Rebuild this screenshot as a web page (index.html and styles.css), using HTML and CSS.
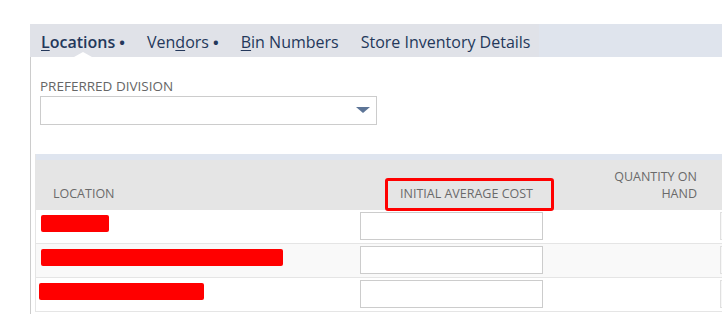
FILE: index.html
```html
<!DOCTYPE html>
<html>

<head>
	<meta charset="UTF-8">
	<meta name="viewport" content="width=device-width, initial-scale=1.0">
	<title>Locations</title>
	<link rel="stylesheet" href="styles.css">
</head>

<body>
	<div class="subtabs">
		<div class="tabs">
			<div class="tab active"><u>L</u>ocations <span class="dot">&bull;</span></div>
			<div class="tab">Ven<u>d</u>ors <span class="dot">&bull;</span></div>
			<div class="tab"><u>B</u>in Numbers</div>
			<div class="tab">Store Inventory Details</div>
		</div>
	</div>

	<div class="panel">
		<div class="field">
			<label>Preferred Division</label>
			<div class="select"><span class="arrow"></span></div>
		</div>

		<div class="grid">
			<div class="strip"></div>
			<div class="head">Location</div>
			<div class="head mark">Initial Average Cost<span class="highlight"></span></div>
			<div class="head right">Quantity on<br>Hand</div>
			<div class="head"></div>

			<div class="cell"><span class="redact" style="width: 68px"></span></div>
			<div class="cell"><div class="input"></div></div>
			<div class="cell"></div>
			<div class="cell"><div class="input stub"></div></div>

			<div class="cell alt"><span class="redact" style="width: 242px"></span></div>
			<div class="cell alt"><div class="input"></div></div>
			<div class="cell alt"></div>
			<div class="cell alt"><div class="input stub"></div></div>

			<div class="cell"><span class="redact shift" style="width: 165px"></span></div>
			<div class="cell"><div class="input"></div></div>
			<div class="cell"></div>
			<div class="cell"><div class="input stub"></div></div>
		</div>
	</div>
</body>

</html>
```

FILE: styles.css
```css
* {
	margin: 0px;
	padding: 0px;
	box-sizing: border-box;
}

body {
	font-family: "Open Sans", "Liberation Sans", sans-serif;
	background-color: #ffffff;
	overflow: hidden;
	width: 722px;
	height: 314px;
}

.subtabs {
	margin-top: 24px;
	margin-left: 30px;
	height: 33px;
	background-color: #dfe4ed;
}

.tabs {
	display: inline-flex;
	height: 33px;
	background-color: #e0e2e8;
}

.tab {
	position: relative;
	padding: 3px 11px 0px 11px;
	font-size: 16px;
	line-height: 30px;
	color: #24385b;
	white-space: nowrap;
}

.tab:last-child {
	padding-right: 9px;
}

.tab u {
	text-decoration-thickness: 1px;
	text-underline-offset: 2px;
}

.tab .dot {
	font-size: 15px;
	font-weight: 700;
}

.tab.active {
	font-weight: 600;
}

.tab.active::after {
	content: "";
	position: absolute;
	left: 50%;
	bottom: 0px;
	margin-left: -9px;
	border-left: 9px solid transparent;
	border-right: 9px solid transparent;
	border-bottom: 5px solid #ffffff;
}

.panel {
	margin-left: 30px;
	border-left: 1px solid #cccccc;
	padding-left: 4px;
	padding-top: 21px;
	height: 257px;
}

.field {
	margin-left: 5px;
}

.field label {
	display: block;
	font-size: 13.5px;
	line-height: 16px;
	text-transform: uppercase;
	color: #666666;
	padding-bottom: 2px;
}

.select {
	position: relative;
	width: 337px;
	height: 29px;
	border: 1px solid #cccccc;
}

.select .arrow {
	position: absolute;
	right: 6px;
	top: 10px;
	border-left: 7px solid transparent;
	border-right: 7px solid transparent;
	border-top: 6px solid #5d7597;
}

.grid {
	margin-top: 29px;
	display: grid;
	grid-template-columns: 319px 200px 164px 1fr;
	width: 687px;
	border-left: 1px solid #e5e5e5;
}

.strip {
	grid-column: 1 / -1;
	height: 6px;
	background-color: #dfe5ef;
}

.head {
	position: relative;
	height: 50px;
	background-color: #e5e5e5;
	font-size: 12.5px;
	line-height: 17px;
	text-transform: uppercase;
	color: #6a6a6a;
	padding: 25px 0px 0px 17px;
	white-space: nowrap;
}

.head.mark {
	padding-left: 45px;
}

.head.right {
	text-align: right;
	padding: 8px 22px 0px 0px;
}

.highlight {
	position: absolute;
	left: 30px;
	top: 18px;
	width: 169px;
	height: 33px;
	border: 3px solid #ff0000;
	border-radius: 3px;
}

.cell {
	height: 34px;
	border-bottom: 1px solid #e5e5e5;
	padding: 2px 0px 0px 5px;
	background-color: #ffffff;
	overflow: hidden;
}

.cell.alt {
	background-color: #f9f9f9;
}

.redact {
	display: block;
	height: 17px;
	margin-top: 3px;
	background-color: #ff0000;
	border-radius: 2px;
}

.redact.shift {
	margin-left: -2px;
}

.input {
	width: 183px;
	height: 28px;
	border: 1px solid #cccccc;
	background-color: #ffffff;
}

.input.stub {
	margin-left: -4px;
	border-color: #e0e0e0;
	background-color: #f7f7f7;
}
```
